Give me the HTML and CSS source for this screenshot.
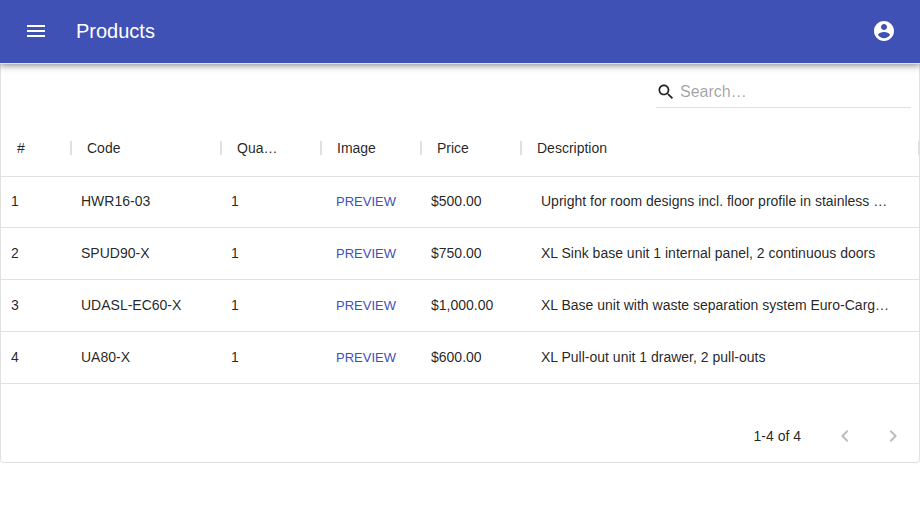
FILE: index.html
```html
<!DOCTYPE html>
<html lang="en">
<head>
<meta charset="utf-8">
<meta name="viewport" content="width=device-width, initial-scale=1">
<title>Products</title>
<link rel="stylesheet" href="styles.css">
</head>
<body>
<header class="app-bar">
  <button class="icon-button" type="button" aria-label="Menu">
    <svg class="icon" viewBox="0 0 24 24"><path d="M3 18h18v-2H3v2zm0-5h18v-2H3v2zm0-7v2h18V6H3z"/></svg>
  </button>
  <h1 class="app-title">Products</h1>
  <button class="icon-button" type="button" aria-label="Account">
    <svg class="icon" viewBox="0 0 24 24"><path d="M12 2C6.48 2 2 6.48 2 12s4.480 10 10 10 10-4.480 10-10S17.520 2 12 2zm0 3c1.660 0 3 1.340 3 3s-1.340 3-3 3-3-1.340-3-3 1.340-3 3-3zm0 14.200c-2.500 0-4.710-1.280-6-3.220.03-1.990 4-3.080 6-3.080 1.990 0 5.970 1.090 6 3.080-1.290 1.940-3.500 3.220-6 3.220z"/></svg>
  </button>
</header>
<main class="grid-card">
  <div class="toolbar">
    <label class="search">
      <svg class="icon icon-small" viewBox="0 0 24 24" aria-hidden="true"><path d="M15.500 14h-.79l-.28-.27C15.410 12.590 16 11.110 16 9.500 16 5.910 13.090 3 9.500 3S3 5.910 3 9.500 5.910 16 9.500 16c1.610 0 3.090-.59 4.230-1.570l.27.28v.79l5 4.990L20.490 19l-4.990-5zm-6 0C7.010 14 5 11.990 5 9.500S7.010 5 9.500 5 14 7.010 14 9.500 11.990 14 9.500 14z"/></svg>
      <input class="search-input" type="text" placeholder="Search…" aria-label="Search">
    </label>
  </div>
  <table class="grid">
    <colgroup>
      <col class="col-index"><col class="col-code"><col class="col-short"><col class="col-short"><col class="col-short"><col>
    </colgroup>
    <thead>
      <tr>
        <th scope="col"><div class="clip">#</div></th>
        <th scope="col"><div class="clip">Code</div></th>
        <th scope="col"><div class="clip">Quantity</div></th>
        <th scope="col"><div class="clip">Image</div></th>
        <th scope="col"><div class="clip">Price</div></th>
        <th scope="col"><div class="clip">Description</div></th>
      </tr>
    </thead>
    <tbody>
      <tr><td>1</td><td>HWR16-03</td><td>1</td><td><button class="text-button" type="button">PREVIEW</button></td><td>$500.00</td><td class="description"><div class="clip">Upright for room designs incl. floor profile in stainless steel</div></td></tr>
      <tr><td>2</td><td>SPUD90-X</td><td>1</td><td><button class="text-button" type="button">PREVIEW</button></td><td>$750.00</td><td class="description"><div class="clip">XL Sink base unit 1 internal panel, 2 continuous doors</div></td></tr>
      <tr><td>3</td><td>UDASL-EC60-X</td><td>1</td><td><button class="text-button" type="button">PREVIEW</button></td><td>$1,000.00</td><td class="description"><div class="clip">XL Base unit with waste separation system Euro-Cargo 60</div></td></tr>
      <tr><td>4</td><td>UA80-X</td><td>1</td><td><button class="text-button" type="button">PREVIEW</button></td><td>$600.00</td><td class="description"><div class="clip">XL Pull-out unit 1 drawer, 2 pull-outs</div></td></tr>
    </tbody>
  </table>
  <nav class="pagination" aria-label="Pagination">
    <span class="page-range">1-4 of 4</span>
    <button class="icon-button" type="button" aria-label="Previous page" disabled>
      <svg class="icon" viewBox="0 0 24 24"><path d="M15.410 7.410L14 6l-6 6 6 6 1.410-1.410L10.830 12z"/></svg>
    </button>
    <button class="icon-button" type="button" aria-label="Next page" disabled>
      <svg class="icon" viewBox="0 0 24 24"><path d="M10 6L8.590 7.410 13.170 12l-4.580 4.590L10 18l6-6z"/></svg>
    </button>
  </nav>
</main>
</body>
</html>
```
FILE: styles.css
```css
* {
  box-sizing: border-box;
}

body {
  margin: 0;
  background: #fff;
  color: rgba(0, 0, 0, 0.87);
  font-family: "Liberation Sans", Arial, sans-serif;
  font-size: 14px;
  line-height: 20px;
}

button,
input {
  border: 0;
  background: none;
  color: inherit;
  font: inherit;
}

.icon {
  display: block;
  width: 24px;
  height: 24px;
  fill: currentColor;
}

.icon-small {
  width: 20px;
  height: 20px;
}

.icon-button {
  flex: none;
  padding: 12px;
}

.icon-button:disabled {
  color: rgba(0, 0, 0, 0.26);
}

.app-bar {
  position: relative;
  z-index: 1;
  display: flex;
  align-items: center;
  gap: 16px;
  height: 64px;
  padding: 0 12px 1px;
  border-bottom: 1px solid #dfe0ea;
  background: #3f51b5;
  color: #fff;
  box-shadow: 0 2px 4px -1px rgba(0, 0, 0, 0.2), 0 4px 5px 0 rgba(0, 0, 0, 0.14), 0 1px 10px 0 rgba(0, 0, 0, 0.12);
}

.app-title {
  flex: 1;
  margin: 0;
  font-size: 20px;
  font-weight: 400;
  line-height: 32px;
}

.grid-card {
  overflow: hidden;
  border: 1px solid #e0e0e0;
  border-top: 0;
  border-radius: 0 0 4px 4px;
}

.toolbar {
  display: flex;
  justify-content: flex-end;
  padding: 12px 8px;
}

.search {
  display: flex;
  align-items: center;
  gap: 4px;
  width: 255px;
  height: 32px;
  border-bottom: 1px solid #e0e0e0;
}

.search-input {
  flex: 1;
  min-width: 0;
  padding: 0;
  outline: 0;
  font-size: 16px;
}

.search-input::placeholder {
  color: rgba(0, 0, 0, 0.38);
  opacity: 1;
}

.grid {
  width: 100%;
  table-layout: fixed;
  border-spacing: 0;
}

.col-index {
  width: 70px;
}

.col-code {
  width: 150px;
}

.col-short {
  width: 100px;
}

th,
td {
  border-bottom: 1px solid #e0e0e0;
  text-align: left;
  white-space: nowrap;
}

th {
  position: relative;
  height: 57px;
  padding: 0 40px 0 16px;
  font-weight: 400;
}

th:first-child {
  padding-right: 16px;
}

th::after {
  content: "";
  position: absolute;
  top: 21px;
  right: -1px;
  width: 2px;
  height: 14px;
  background: #e0e0e0;
}

td {
  height: 52px;
  padding: 0 10px 2px;
}

tbody tr:first-child td {
  height: 51px;
}

.description {
  padding: 0 28px 2px 20px;
}

.clip {
  overflow: hidden;
  text-overflow: ellipsis;
}

.text-button {
  display: block;
  padding: 6px 5px 4px;
  color: #3f51b5;
  font-size: 13px;
}

.pagination {
  display: flex;
  align-items: center;
  justify-content: flex-end;
  height: 52px;
  margin-top: 26px;
  padding-right: 2px;
}

.page-range {
  margin-right: 20px;
}
```
